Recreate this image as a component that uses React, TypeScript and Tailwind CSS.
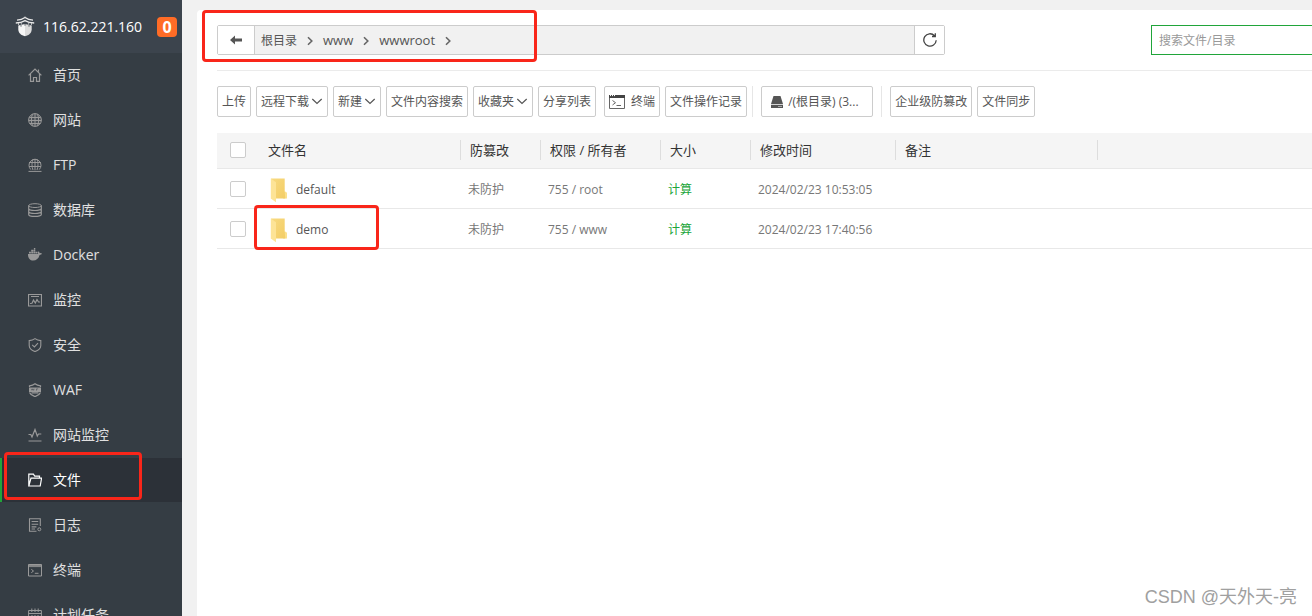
import type { ReactNode } from 'react';

function Icon({ children, className = 'h-[14px] w-[14px]' }: { children: ReactNode; className?: string }) {
  return (
    <svg viewBox="0 0 14 14" className={className} fill="none" stroke="currentColor" strokeWidth="1" aria-hidden="true">
      {children}
    </svg>
  );
}

const HomeIcon = (
  <Icon>
    <path d="M.6 7.400 7 1l6.400 6.400M2.500 6v7.400h3V9.500h3v3.900h3V6M10.500 3.800V1.500" strokeWidth="1.200" />
  </Icon>
);
const GlobeIcon = (
  <Icon>
    <circle cx="7" cy="7" r="6.400" fill="currentColor" fillOpacity=".2" />
    <path d="M1.200 4.500h11.600M.8 7.500h12.400M1.500 10.500h11M7 .6v12.800M4.500 1.200C3 4.500 3 9.500 4.500 12.800M9.500 1.200c1.500 3.300 1.500 8.300 0 11.600" />
  </Icon>
);
const FtpIcon = (
  <Icon>
    <path d="M2.800 11.600A6 6 0 1 1 11.200 11.600M1 4.500h12M1 8.500h12M7 .8v11.400M5.200 1C3.600 4 3.600 8.500 5 12M8.800 1c1.600 3 1.600 7.500.2 11M.5 13.400h13" />
  </Icon>
);
const DatabaseIcon = (
  <Icon>
    <ellipse cx="7" cy="2.600" rx="6.300" ry="1.900" />
    <path d="M.7 2.600v8.800c0 1.100 2.800 2 6.300 2s6.300-.9 6.300-2V2.600M.7 5.500c0 1.100 2.800 2 6.300 2s6.300-.9 6.300-2M.7 8.500c0 1.100 2.800 2 6.300 2s6.300-.9 6.300-2" strokeWidth="1.200" />
  </Icon>
);
const DockerIcon = (
  <Icon>
    <path
      d="M0 6h10.200c-.5-1-.4-2 .3-2.700.7.5 1 1.100 1.100 1.900.8-.2 1.700 0 2.400.4-.5 1-1.300 1.400-2.400 1.400-1 3.600-3.200 5.500-6.500 5.500C2 12.500-.2 10 0 6zM1 3.700h1.900v1.800H1zM3.200 3.700h1.900v1.800H3.200zM5.400 3.700h1.900v1.800H5.400zM7.600 3.700h1.900v1.800H7.600zM3.200 1.700h1.900v1.700H3.200zM5.400 1.700h1.900v1.700H5.400zM5.900 0h1.400v1.400H5.900z"
      fill="currentColor"
      stroke="none"
    />
  </Icon>
);
const MonitorIcon = (
  <Icon>
    <path d="M.5 1.500h13v11.500H.5zM3 3.500h8M2 10.500l2-.2 1.500-3.300 1.800 3 1.700-3.500 1.500 2.500h1.500" strokeWidth="1.200" />
  </Icon>
);
const ShieldIcon = (
  <Icon>
    <path d="M7 .6C5.300 1.900 3.200 2.500 1.200 2.600v5c0 2.900 2.500 4.800 5.800 6 3.300-1.200 5.800-3.100 5.800-6v-5C10.800 2.500 8.700 1.900 7 .6zM4.200 6.900l2.200 2 3.600-3.700" strokeWidth="1.100" />
  </Icon>
);
const WafIcon = (
  <Icon>
    <path d="M1.500 4V2.900C3.500 2.700 5.500 2 7 .8c1.500 1.200 3.500 1.900 5.500 2.100V4M1.500 9.500C2.300 11.400 4.400 12.800 7 13.600c2.600-.8 4.700-2.200 5.500-4.100M3.500 9.800h7" strokeWidth="1.200" />
    <path d="M1 4.500h12V9H1z" fill="currentColor" stroke="none" />
    <path d="M3.300 5.800l.7 1.500.8-1.500.8 1.500.6-1.500M8.500 7.600V5.900h1.600" stroke="#353d44" strokeWidth=".5" />
  </Icon>
);
const PulseIcon = (
  <Icon>
    <path d="M.5 6.500h2.300L4 9l3-7.500L9.300 8l1.200-2h2.800M.5 13h13" strokeWidth="1.200" />
  </Icon>
);
const FolderIcon = (
  <Icon>
    <path d="M.8 13V1.200h4.600l1.300 1.900h4.800v2M.8 13 3 5.200h10.600L12.200 13z" strokeWidth="1.200" />
  </Icon>
);
const LogIcon = (
  <Icon>
    <path d="M12.300 8V.7H1.500v12.600h7M3.600 3.500h6.600M3.600 6.200h6.600M3.600 8.900h4.800M3.600 11h3.400" strokeWidth="1.100" />
    <circle cx="11.300" cy="11.300" r="1.500" />
  </Icon>
);
const TerminalIcon = (
  <Icon>
    <path d="M.5 1.500h13v11.500H.5zM3.300 6.300 5.500 8l-2.200 1.700M6.800 10.300h3.700" />
    <path d="M.5 1.500h13v2.600H.5z" fill="currentColor" fillOpacity=".8" stroke="none" />
  </Icon>
);
const CalendarIcon = (
  <Icon>
    <path d="M.6 2.500h12.800v11H.6zM.6 5.500h12.800M3.800.5v3.500M10.200.5v3.500M7 .5v3.500M3 8h2M6 8h2M9 8h2M3 10.500h2M6 10.500h2M9 10.500h2" />
  </Icon>
);

const menu: { label: string; icon: ReactNode; active?: boolean }[] = [
  { label: '首页', icon: HomeIcon },
  { label: '网站', icon: GlobeIcon },
  { label: 'FTP', icon: FtpIcon },
  { label: '数据库', icon: DatabaseIcon },
  { label: 'Docker', icon: DockerIcon },
  { label: '监控', icon: MonitorIcon },
  { label: '安全', icon: ShieldIcon },
  { label: 'WAF', icon: WafIcon },
  { label: '网站监控', icon: PulseIcon },
  { label: '文件', icon: FolderIcon, active: true },
  { label: '日志', icon: LogIcon },
  { label: '终端', icon: TerminalIcon },
  { label: '计划任务', icon: CalendarIcon },
];

function Logo() {
  return (
    <svg viewBox="0 0 20 21" className="h-[21px] w-5" fill="none" aria-hidden="true">
      <path d="M3.300 9.500 10 8v12.300C6 19.300 3.500 17 3.300 13.500z" fill="#f6f6f6" />
      <path d="M10 8l6.700 1.500v4c-.2 3.500-2.700 5.800-6.700 6.800z" fill="#dcdcdc" />
      <path d="M2 4.200c3-.1 5.600-.9 8-2.700 2.400 1.800 5 2.600 8 2.700M.8 7c3.400-.1 6.600-.8 9.200-2.400C12.600 6.200 15.800 6.900 19.200 7" stroke="#e8e8e8" strokeWidth="1.300" />
      <path d="M3.500 7v2M6.300 6.800v1.900M13.700 6.800v1.900M16.500 7v2M10 .5v1.500" stroke="#d8d8d8" strokeWidth=".8" />
      <path d="M6 9v1.700M10 8v1.700M14 9v1.700" stroke="#3c444d" strokeWidth=".8" />
    </svg>
  );
}

function Sidebar() {
  return (
    <aside className="relative w-[182px] shrink-0 overflow-hidden bg-[#353d44]">
      <div className="flex h-[53px] items-center bg-[#3c444d] pl-[15px]">
        <Logo />
        <span className="ml-2 flex-1 text-[14px] text-white">116.62.221.160</span>
        <span className="mr-[5px] flex h-5 w-5 items-center justify-center rounded bg-[#ff6c26] text-[16px] font-bold text-white">0</span>
      </div>
      <nav>
        <ul>
          {menu.map((m) => (
            <li key={m.label} className="mb-px">
              <a
                href="#"
                className={
                  m.active
                    ? 'flex h-11 items-center gap-[11px] border-l-2 border-[#20a53a] bg-[#2c3138] pl-[26px] text-[14px] text-white'
                    : 'flex h-11 items-center gap-[11px] border-l-2 border-transparent pl-[26px] text-[14px] text-[#e0e0e0]'
                }
              >
                <span className={m.active ? 'text-white' : 'text-[#999]'}>{m.icon}</span>
                <span className="pb-[2px]">{m.label}</span>
              </a>
            </li>
          ))}
        </ul>
      </nav>
      <div className="pointer-events-none absolute top-[452px] left-1 h-12 w-[138px] rounded border-3 border-[#f9261a]" />
    </aside>
  );
}

function Crumb({ label, latin }: { label: string; latin?: boolean }) {
  return (
    <li className="flex items-center">
      <a href="#" className={latin ? 'text-[13px]' : 'text-[12px]'}>
        {label}
      </a>
      <svg viewBox="0 0 6 10" className="mx-[10px] h-[10px] w-[6px]" fill="none" stroke="#666" strokeWidth="1.600" aria-hidden="true">
        <path d="M1 1.300 4.800 5 1 8.700" />
      </svg>
    </li>
  );
}

function PathBar() {
  return (
    <div className="flex h-[61px] items-center justify-between border-b border-[#ebebeb]">
      <div className="flex h-[30px] w-[728px] rounded-xs border border-[#ccc] bg-[#f1f1f1]">
        <button type="button" aria-label="返回" className="flex w-[37px] items-center justify-center border-r border-[#ccc] bg-white">
          <svg viewBox="0 0 12 10" className="h-[10px] w-3" fill="#555" aria-hidden="true">
            <path d="M0 5 5 .5v3h7v3H5v3z" />
          </svg>
        </button>
        <ol className="flex flex-1 items-center pt-[2px] pl-[6px] text-[#555]">
          <Crumb label="根目录" />
          <Crumb label="www" latin />
          <Crumb label="wwwroot" latin />
        </ol>
        <button type="button" aria-label="刷新" className="flex w-[30px] items-center justify-center border-l border-[#ccc] bg-white">
          <svg viewBox="0 0 14 14" className="h-[14px] w-[14px]" fill="none" stroke="#444" strokeWidth="1.300" aria-hidden="true">
            <path d="M13.200 7.300A6.200 6.200 0 1 1 11.500 2.700M12.300.3v3.200H9" />
          </svg>
        </button>
      </div>
      <input
        type="text"
        aria-label="搜索文件/目录"
        placeholder="搜索文件/目录"
        className="h-[30px] w-[161px] border border-r-0 border-[#20a53a] bg-white pl-[7px] text-[12px] outline-none placeholder:text-[#999]"
      />
    </div>
  );
}

function ToolButton({ children, caret, className = '' }: { children: ReactNode; caret?: boolean; className?: string }) {
  return (
    <button
      type="button"
      className={`flex h-[31px] shrink-0 items-center rounded-xs border border-[#ccc] bg-white px-1 pt-px whitespace-nowrap ${className}`}
    >
      {children}
      {caret && (
        <svg viewBox="0 0 12 8" className="ml-[2px] h-2 w-3" fill="none" stroke="#555" strokeWidth="1.200" aria-hidden="true">
          <path d="M1.300 1 6 5.500 10.700 1" />
        </svg>
      )}
    </button>
  );
}

function Toolbar() {
  return (
    <div className="flex h-[62px] items-center gap-[5px] pb-px text-[12px] text-[#555]">
      <ToolButton>上传</ToolButton>
      <ToolButton caret>远程下载</ToolButton>
      <ToolButton caret>新建</ToolButton>
      <ToolButton>文件内容搜索</ToolButton>
      <ToolButton caret>收藏夹</ToolButton>
      <ToolButton>分享列表</ToolButton>
      <ToolButton className="ml-[3px] gap-[6px]">
        <svg viewBox="0 0 16 14" className="h-[14px] w-4" fill="none" stroke="#666" aria-hidden="true">
          <path d="M.5 1.500h15v12H.5zM3.500 5.500l3 2.200-3 2.300M7.500 10.500h4.500" />
          <path d="M7 0h9v3H0V0h1v1.500h1V0h1v1.500h1V0h1v1.500h1V0z" fill="#444" stroke="none" />
        </svg>
        终端
      </ToolButton>
      <ToolButton>文件操作记录</ToolButton>
      <span className="mr-[3px] h-[31px] w-px bg-[#e6e6e6]" />
      <ToolButton className="w-28 gap-[5px] pl-[9px]">
        <svg viewBox="0 0 12 12" className="h-3 w-3 shrink-0" fill="#555" aria-hidden="true">
          <path d="M2.500 0h7L12 8H0zM0 8.800h12V12H0z" />
          <path d="M7.500 10.500h1M9.500 10.500h1" stroke="#fff" />
        </svg>
        <span>/(根目录) (3...</span>
      </ToolButton>
      <span className="mx-[3px] h-[31px] w-px bg-[#e6e6e6]" />
      <ToolButton>企业级防篡改</ToolButton>
      <ToolButton>文件同步</ToolButton>
    </div>
  );
}

function Check({ label }: { label: string }) {
  return (
    <input
      type="checkbox"
      aria-label={label}
      className="ml-[13px] block h-4 w-4 appearance-none rounded-xs border border-[#ccc] bg-white checked:bg-[#20a53a]"
    />
  );
}

function YellowFolder() {
  return (
    <svg viewBox="0 0 18 26" className="h-[26px] w-[18px]" aria-hidden="true">
      <defs>
        <linearGradient id="folder-body" x1="0" y1="0" x2="1" y2="1">
          <stop offset="0" stopColor="#f8da80" />
          <stop offset="1" stopColor="#f3cd66" />
        </linearGradient>
      </defs>
      <path d="M13 14.500h2.200l1.800 1.300v5.700h-4z" fill="#fbe08c" />
      <path d="M1 1.500h13.700v13.300l.6 6.700H1z" fill="url(#folder-body)" />
      <path d="M.8 1.500 6 5.200V25.200L.8 21.500z" fill="#fde497" />
    </svg>
  );
}

const columns = ['防篡改', '权限 / 所有者', '大小', '修改时间', '备注'];
const files = [
  { name: 'default', owner: '755 / root', time: '2024/02/23 10:53:05' },
  { name: 'demo', owner: '755 / www', time: '2024/02/23 17:40:56', marked: true },
];

function FileTable() {
  return (
    <table className="w-full table-fixed border-collapse text-left">
      <colgroup>
        <col className="w-[41px]" />
        <col className="w-[203px]" />
        <col className="w-20" />
        <col className="w-[120px]" />
        <col className="w-[90px]" />
        <col className="w-[145px]" />
        <col className="w-[202px]" />
        <col />
      </colgroup>
      <thead>
        <tr className="h-[35px] border-b border-[#e8e8e8] bg-[#f5f5f5] text-[13px] text-[#333]">
          <th className="p-0">
            <Check label="全选" />
          </th>
          <th className="p-0 font-normal">
            <div className="h-5 border-r border-[#ddd] pl-[10px] leading-5">文件名</div>
          </th>
          {columns.map((c) => (
            <th key={c} className="p-0 font-normal">
              <div className="h-5 border-r border-[#ddd] pl-[9px] leading-5">{c}</div>
            </th>
          ))}
          <th className="p-0" />
        </tr>
      </thead>
      <tbody className="text-[12px] text-[#777]">
        {files.map((f) => (
          <tr key={f.name} className="h-10 border-b border-[#e8e8e8]">
            <td className="p-0 pt-px">
              <Check label={f.name} />
            </td>
            <td className="relative p-0 pt-[3px]">
              <a href="#" className="flex items-center gap-2 pl-3 text-[#555]">
                <YellowFolder />
                {f.name}
              </a>
              {f.marked && (
                <div className="pointer-events-none absolute -top-1 -left-1 h-[45px] w-[125px] rounded border-3 border-[#f9261a]" />
              )}
            </td>
            <td className="p-0 pt-[3px] pl-[7px]">未防护</td>
            <td className="p-0 pt-[3px] pl-[7px]">{f.owner}</td>
            <td className="p-0 pt-[3px] pl-[7px]">
              <a href="#" className="text-[#20a53a]">
                计算
              </a>
            </td>
            <td className="p-0 pt-[3px] pl-[7px]">{f.time}</td>
            <td />
            <td />
          </tr>
        ))}
      </tbody>
    </table>
  );
}

export default function App() {
  return (
    <div className="flex h-screen overflow-hidden bg-[#f1f1f1] font-['Open_Sans','Noto_Sans_CJK_SC',sans-serif]">
      <Sidebar />
      <main className="relative min-w-0 flex-1 pt-[10px] pl-[15px]">
        <section className="h-full rounded-tl bg-white pl-5">
          <PathBar />
          <Toolbar />
          <FileTable />
        </section>
        <div className="pointer-events-none absolute top-[10px] left-5 h-[52px] w-[335px] rounded border-3 border-[#f9261a]" />
        <p className="pointer-events-none absolute right-[15px] bottom-[5px] font-['Liberation_Sans','Noto_Sans_CJK_SC',sans-serif] text-[18px] text-[#a0a0a0]">
          CSDN @天外天-亮
        </p>
      </main>
    </div>
  );
}
